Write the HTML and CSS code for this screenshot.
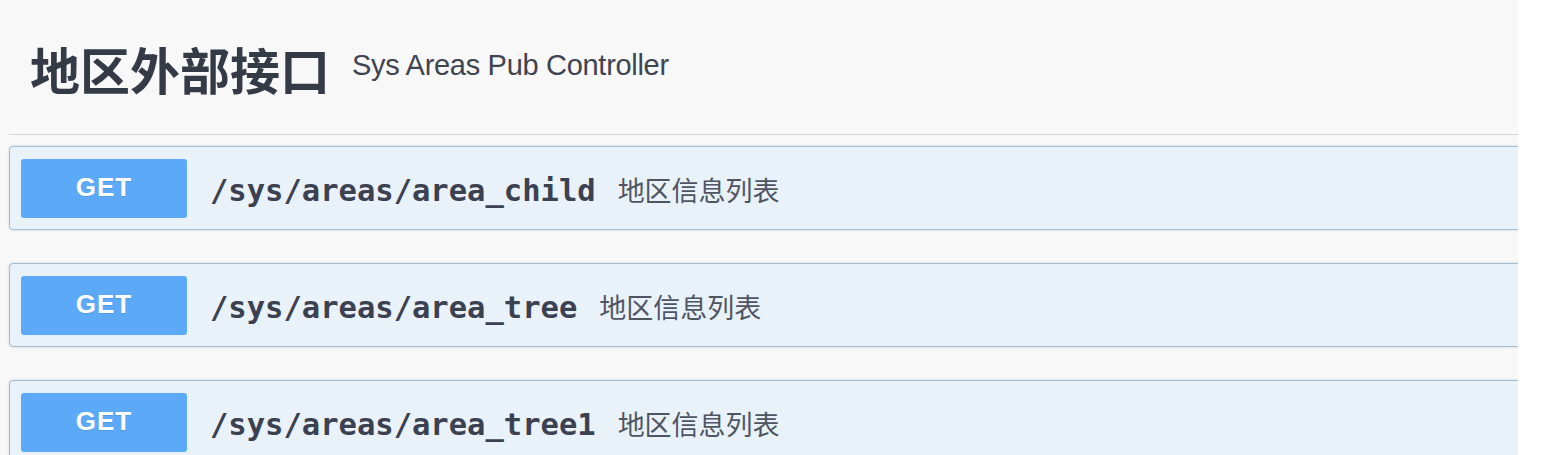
FILE: index.html
```html
<!DOCTYPE html>
<html lang="zh">
<head>
<meta charset="utf-8">
<title>地区外部接口</title>
<link rel="stylesheet" href="styles.css">
</head>
<body>
<div class="wrapper">
  <section class="tag-section">
    <h4 class="tag-header">
      <span class="tag-title">地区外部接口</span>
      <small class="tag-desc">Sys Areas Pub Controller</small>
    </h4>
    <div class="opblocks">
      <div class="opblock">
        <span class="method">GET</span>
        <span class="path">/sys/areas/area_child</span>
        <span class="summary">地区信息列表</span>
      </div>
      <div class="opblock">
        <span class="method">GET</span>
        <span class="path">/sys/areas/area_tree</span>
        <span class="summary">地区信息列表</span>
      </div>
      <div class="opblock">
        <span class="method">GET</span>
        <span class="path">/sys/areas/area_tree1</span>
        <span class="summary">地区信息列表</span>
      </div>
    </div>
  </section>
</div>
</body>
</html>
```

FILE: styles.css
```css
html, body {
  margin: 0;
  padding: 0;
  background: #ffffff;
  height: 100%;
  overflow: hidden;
}

.wrapper {
  width: 1518px;
  height: 100%;
  background: #f8f8f8;
  overflow: hidden;
  padding-left: 9px;
  box-sizing: border-box;
}

.tag-section {
  margin-right: -12px;
}

.tag-header {
  margin: 0;
  height: 135px;
  box-sizing: border-box;
  padding: 2px 0 0 21px;
  display: flex;
  align-items: center;
  border-bottom: 1px solid #d6d6d6;
  color: #3b4151;
}

.tag-title {
  font-family: "Noto Sans CJK SC", "Noto Sans", sans-serif;
  font-weight: 700;
  font-size: 50px;
  line-height: 1;
  color: #353a47;
}

.tag-desc {
  font-family: "Liberation Sans", Arial, sans-serif;
  font-weight: 400;
  font-size: 29px;
  color: #3f4451;
  margin-left: 22px;
  margin-top: -6px;
  letter-spacing: -0.3px;
}

.opblocks {
  padding-top: 11px;
  display: flex;
  flex-direction: column;
  gap: 33px;
}

.opblock {
  display: flex;
  align-items: center;
  height: 84px;
  box-sizing: border-box;
  padding: 0 11px;
  border: 1px solid #9fbdd5;
  border-radius: 4px;
  background: #e9f1f9;
  box-shadow: 0 0 3px rgba(0, 0, 0, 0.15);
}

.method {
  flex: none;
  width: 166px;
  height: 59px;
  border-radius: 3px;
  background: #5ba9f7;
  color: #ffffff;
  font-family: "Liberation Sans", Arial, sans-serif;
  font-weight: 700;
  font-size: 26px;
  letter-spacing: 1px;
  display: flex;
  align-items: center;
  justify-content: center;
  padding-bottom: 2px;
  box-sizing: border-box;
  text-shadow: 0 1px 0 rgba(0, 0, 0, 0.1);
}

.path {
  font-family: "DejaVu Sans Mono", "Liberation Mono", monospace;
  font-weight: 700;
  font-size: 30.5px;
  color: #3b4151;
  margin-left: 23px;
  padding-top: 4px;
}

.summary {
  font-family: "Noto Sans CJK SC", "Noto Sans", sans-serif;
  font-size: 27px;
  color: #4f5563;
  margin-left: 22px;
  padding-top: 2px;
}
```
